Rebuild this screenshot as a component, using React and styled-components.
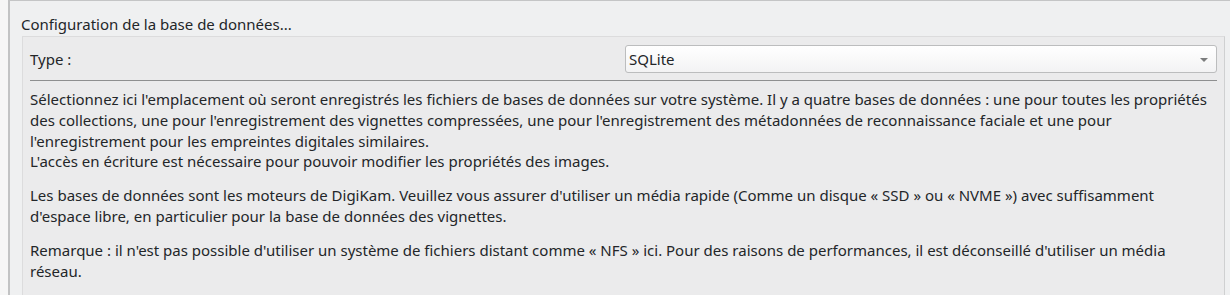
import React from 'react';
import styled, { createGlobalStyle } from 'styled-components';

const GlobalStyle = createGlobalStyle`
  html, body {
    margin: 0;
    padding: 0;
    background: #f6f6f6;
  }
  body {
    font-family: "Noto Sans", "Liberation Sans", sans-serif;
    font-size: 15px;
    color: #232629;
  }
`;

const Page = styled.div`
  display: flex;
  height: 295px;
  padding-left: 8px;
  overflow: hidden;
`;

const Frame = styled.div`
  flex: 1;
  display: flex;
  flex-direction: column;
  background: #eff0f1;
  border-left: 2px solid #c2c3c4;
  border-top: 1px solid #c4c5c6;
  padding: 13px 5px 0 12px;
`;

const Title = styled.div`
  line-height: 20px;
  margin-left: -1px;
  margin-bottom: 2px;
`;

const GroupBox = styled.div`
  flex: 1;
  background: #ebebec;
  border: 1px solid #dcdcdd;
  border-right-color: #cfd0d1;
  border-bottom: none;
  padding: 8px 7px 0 7px;
`;

const Row = styled.div`
  display: grid;
  grid-template-columns: 1fr 592px;
  align-items: center;
  height: 28px;
`;

const Label = styled.span`
  line-height: 20px;
`;

const Combo = styled.div`
  position: relative;
  height: 28px;
  box-sizing: border-box;
  border: 1px solid #bcbdbe;
  border-radius: 3px;
  background: linear-gradient(#ffffff, #f3f3f4);
  display: flex;
  align-items: center;
  padding-left: 3px;
`;

const Arrow = styled.span`
  position: absolute;
  right: 8px;
  top: 12px;
  width: 0;
  height: 0;
  border-left: 4px solid transparent;
  border-right: 4px solid transparent;
  border-top: 4px solid #7b7c7d;
`;

const Separator = styled.div`
  height: 1px;
  background: #8e8f90;
  margin: 7px 0 0 0;
`;

const Text = styled.div`
  padding-top: 8px;
`;

const Para = styled.p`
  margin: 0 0 13.3px 0;
  line-height: 20.8px;
  white-space: nowrap;
`;

export default function App() {
  return (
    <>
      <GlobalStyle />
      <Page>
        <Frame>
          <Title>Configuration de la base de données...</Title>
          <GroupBox>
            <Row>
              <Label>Type :</Label>
              <Combo>
                SQLite
                <Arrow />
              </Combo>
            </Row>
            <Separator />
            <Text>
              <Para>
                Sélectionnez ici l'emplacement où seront enregistrés les fichiers de bases de données sur votre système. Il y a quatre bases de données : une pour toutes les propriétés
                <br />
                des collections, une pour l'enregistrement des vignettes compressées, une pour l'enregistrement des métadonnées de reconnaissance faciale et une pour
                <br />
                l'enregistrement pour les empreintes digitales similaires.
                <br />
                L'accès en écriture est nécessaire pour pouvoir modifier les propriétés des images.
              </Para>
              <Para>
                Les bases de données sont les moteurs de DigiKam. Veuillez vous assurer d'utiliser un média rapide (Comme un disque « SSD » ou « NVME ») avec suffisamment
                <br />
                d'espace libre, en particulier pour la base de données des vignettes.
              </Para>
              <Para>
                Remarque : il n'est pas possible d'utiliser un système de fichiers distant comme « NFS » ici. Pour des raisons de performances, il est déconseillé d'utiliser un média
                <br />
                réseau.
              </Para>
            </Text>
          </GroupBox>
        </Frame>
      </Page>
    </>
  );
}
